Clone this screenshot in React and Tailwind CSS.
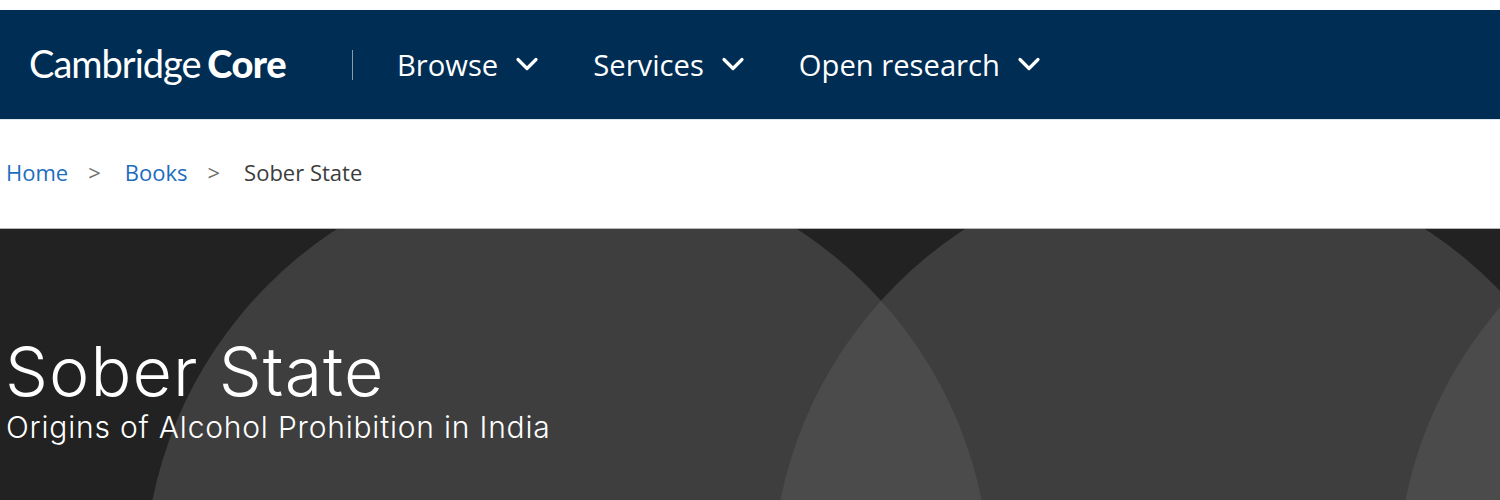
import React from "react";

const Chevron = () => (
  <svg className="w-[24px] h-[16px] -mt-[2px] text-white" viewBox="0 0 24 16" fill="none" stroke="currentColor" strokeWidth="3.2" strokeLinecap="round" strokeLinejoin="round">
    <path d="M3 3.5l9 9 9-9" />
  </svg>
);

function NavItem({ label, className }) {
  return (
    <div className={`flex items-center gap-[17px] pt-[2px] ${className}`}>
      <span className="text-[29.2px] leading-none text-white">{label}</span>
      <Chevron />
    </div>
  );
}

export default function App() {
  return (
    <div className="h-[500px] overflow-hidden bg-white font-['Open_Sans',sans-serif]">
      {/* Header */}
      <div className="mt-[10px] h-[109px] bg-[#002d54] flex items-center">
        <div className="ml-[29px] w-[258px] pb-[4px] font-['Lato',sans-serif] text-[38px] leading-none text-white whitespace-nowrap tracking-[-1px]">
          Cambridge <span className="font-black tracking-[-0.5px] -ml-[2px]">Core</span>
        </div>
        <div className="ml-[65px] w-px h-[30px] bg-[#8a9bab]" />
        <NavItem label="Browse" className="ml-[44px]" />
        <NavItem label="Services" className="ml-[54px]" />
        <NavItem label="Open research" className="ml-[54px]" />
      </div>

      {/* Breadcrumb */}
      <div className="h-[109px] border-t border-[#dfe6ec] flex items-center pl-[6px] pb-[4px] text-[22px] leading-none">
        <span className="text-[#1c6dbd]">Home</span>
        <span className="ml-[20px] text-[#6f6f6f]">&gt;</span>
        <span className="ml-[24px] text-[#1c6dbd]">Books</span>
        <span className="ml-[20px] text-[#6f6f6f]">&gt;</span>
        <span className="ml-[24px] text-[#3c3c3c]">Sober State</span>
      </div>

      {/* Hero */}
      <div className="relative h-[272px] overflow-hidden bg-[#222222] border-t border-[#b5b5b5] pl-[6px] pt-[103px] text-white">
        <div className="absolute left-[144px] top-[-68px] w-[846px] h-[846px] rounded-full bg-[#565656]/[0.54]" />
        <div className="absolute left-[772px] top-[-68px] w-[846px] h-[846px] rounded-full bg-[#565656]/[0.54]" />
        <div className="absolute left-[1397px] top-[-68px] w-[846px] h-[846px] rounded-full bg-[#565656]/[0.54]" />
        <div className="relative font-['Inter',sans-serif] font-light">
          <h1 className="text-[68px] leading-[78px] tracking-[1.1px] -ml-[1px] font-light">Sober State</h1>
          <p className="text-[30px] leading-[36px] tracking-[0.8px] font-light -mt-[1px]">Origins of Alcohol Prohibition in India</p>
        </div>
      </div>
    </div>
  );
}
